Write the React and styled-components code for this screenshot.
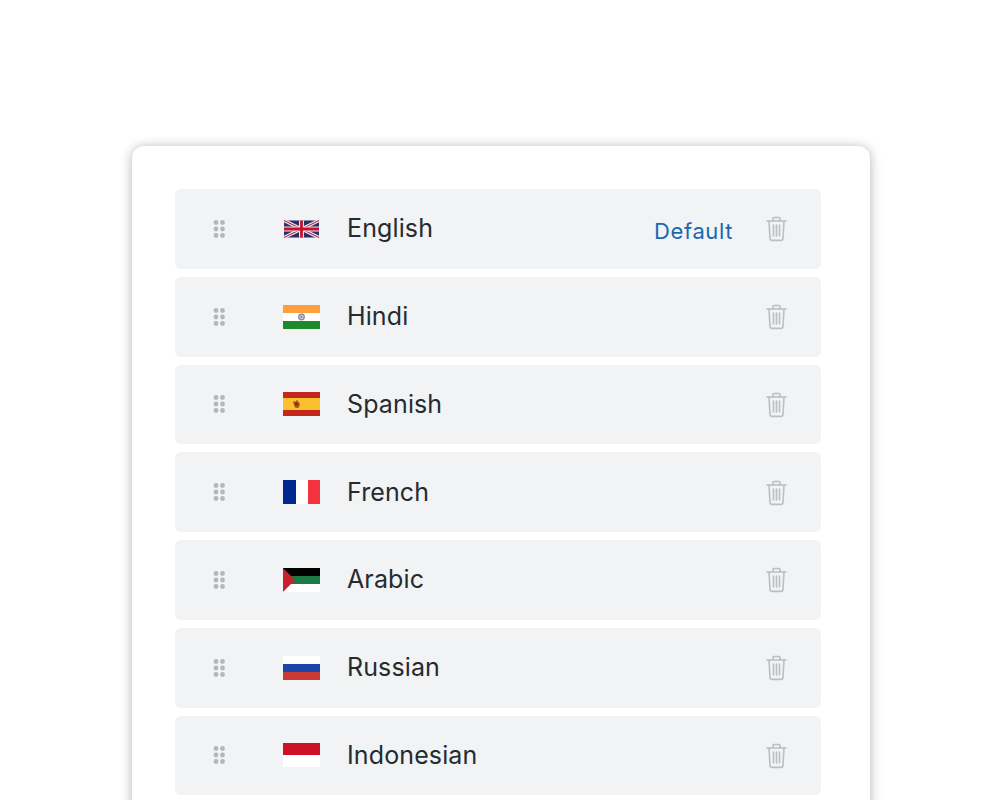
import React from "react";
import styled, { createGlobalStyle } from "styled-components";

const languages = [
  { name: "English", flag: "uk", isDefault: true },
  { name: "Hindi", flag: "in" },
  { name: "Spanish", flag: "es" },
  { name: "French", flag: "fr" },
  { name: "Arabic", flag: "ar" },
  { name: "Russian", flag: "ru" },
  { name: "Indonesian", flag: "id" },
];

const GlobalStyle = createGlobalStyle`
  html, body {
    margin: 0;
    height: 800px;
    overflow: hidden;
    background: #fff;
    font-family: Inter, "Liberation Sans", sans-serif;
  }
`;

const Flag = ({ code }) => {
  if (code === "uk") {
    return (
      <svg width="37" height="24" viewBox="0 0 37 24">
        <rect x="1" y="3.5" width="35" height="17" fill="#2a2d66" />
        <path d="M1 3.5 36 20.5M36 3.5 1 20.5" stroke="#e6e3ea" strokeWidth="3.4" />
        <path d="M1 3.5 36 20.5M36 3.5 1 20.5" stroke="#b5153a" strokeWidth="1" />
        <path d="M18.5 3.5v17M1 12h35" stroke="#f1e4e8" strokeWidth="5" />
        <path d="M18.5 3.5v17M1 12h35" stroke="#c8102e" strokeWidth="2.8" />
      </svg>
    );
  }
  if (code === "in") {
    return (
      <svg width="37" height="24" viewBox="0 0 37 24">
        <rect width="37" height="8" fill="#ff9e3d" />
        <rect y="8" width="37" height="8" fill="#fff" />
        <rect y="16" width="37" height="8" fill="#1f8a2c" />
        <circle cx="18.5" cy="12" r="2.8" fill="#c9cce0" stroke="#7d85b0" strokeWidth="1.2" />
        <circle cx="18.5" cy="12" r="0.8" fill="#3f4f8f" />
      </svg>
    );
  }
  if (code === "es") {
    return (
      <svg width="37" height="24" viewBox="0 0 37 24">
        <rect width="37" height="24" fill="#c4281c" />
        <rect y="6" width="37" height="12" fill="#fbc02d" />
        <path d="M10 9.5h3l1-2 1.5 2.5 1.5 2-1 3.5-2 .5-2-.5-1-2.5Z" fill="#b0501e" />
        <path d="M12 10.5h3v3h-3Z" fill="#7a3b12" />
      </svg>
    );
  }
  if (code === "fr") {
    return (
      <svg width="37" height="24" viewBox="0 0 37 24">
        <rect width="13" height="24" fill="#00268f" />
        <rect x="13" width="12" height="24" fill="#fff" />
        <rect x="25" width="12" height="24" fill="#f5333f" />
      </svg>
    );
  }
  if (code === "ar") {
    return (
      <svg width="37" height="24" viewBox="0 0 37 24">
        <rect width="37" height="8" fill="#000" />
        <rect y="8" width="37" height="8" fill="#1b7a43" />
        <rect y="16" width="37" height="8" fill="#fff" />
        <path d="M0 0 12 12 0 24Z" fill="#c8202f" />
      </svg>
    );
  }
  if (code === "ru") {
    return (
      <svg width="37" height="24" viewBox="0 0 37 24">
        <rect width="37" height="8" fill="#fff" />
        <rect y="8" width="37" height="8" fill="#1c45a8" />
        <rect y="16" width="37" height="8" fill="#c83a34" />
      </svg>
    );
  }
  return (
    <svg width="37" height="24" viewBox="0 0 37 24">
      <rect width="37" height="12" fill="#ce1126" />
      <rect y="12" width="37" height="12" fill="#fff" />
    </svg>
  );
};

const DragHandle = () => (
  <svg width="12" height="18" viewBox="0 0 12 18" fill="#b4b6b8">
    {[2.5, 9, 15.5].map((y) =>
      [3, 9.5].map((x) => <circle key={`${x}-${y}`} cx={x} cy={y} r="2.4" />)
    )}
  </svg>
);

const TrashIcon = () => (
  <svg
    width="24"
    height="26"
    viewBox="0 0 24 26"
    fill="none"
    stroke="#bdbec0"
    strokeWidth="1.6"
    strokeLinecap="round"
    strokeLinejoin="round"
  >
    <path d="M3 5h19" />
    <path d="M9 5V2.5a1 1 0 0 1 1-1h5a1 1 0 0 1 1 1V5" />
    <path d="M5 5l1 17.5a2 2 0 0 0 2 1.9h9a2 2 0 0 0 2-1.9L20 5" />
    <path d="M9.5 9v11M12.5 9v11M15.5 9v11" />
  </svg>
);

const App = () => {
  return (
    <Page>
      <GlobalStyle />
      <Card>
        <List>
          {languages.map((lang) => (
            <Row key={lang.name}>
              <Handle>
                <DragHandle />
              </Handle>
              <FlagBox>
                <Flag code={lang.flag} />
              </FlagBox>
              <Name>{lang.name}</Name>
              {lang.isDefault && <DefaultLabel>Default</DefaultLabel>}
              <Trash>
                <TrashIcon />
              </Trash>
            </Row>
          ))}
        </List>
      </Card>
    </Page>
  );
};

const Page = styled.main`
  height: 800px;
  overflow: hidden;
  padding: 146px 130px 0 132px;
`;

const Card = styled.section`
  background: #fff;
  border-radius: 12px;
  box-shadow: 0 1px 12px rgba(0, 0, 0, 0.3);
  padding: 43px 49px 43px 43px;
`;

const List = styled.ul`
  list-style: none;
  margin: 0;
  padding: 0;
  display: flex;
  flex-direction: column;
  gap: 8px;
`;

const Row = styled.li`
  height: 79.75px;
  display: flex;
  align-items: center;
  background: #f1f3f4;
  border-radius: 6px;
  padding: 0 33px 0 38px;
`;

const Handle = styled.span`
  display: flex;
  width: 70px;
`;

const FlagBox = styled.span`
  display: flex;
  width: 37px;
  margin-right: 27px;
`;

const Name = styled.span`
  flex: 1;
  font-size: 25px;
  line-height: 1;
  letter-spacing: 0.12px;
  color: #262b30;
`;

const DefaultLabel = styled.span`
  font-size: 22px;
  font-weight: 400;
  letter-spacing: 0.6px;
  color: #1a69b0;
  margin-right: 31px;
  margin-top: 4px;
`;

const Trash = styled.span`
  display: flex;
  margin-top: 1px;
`;

export default App;
